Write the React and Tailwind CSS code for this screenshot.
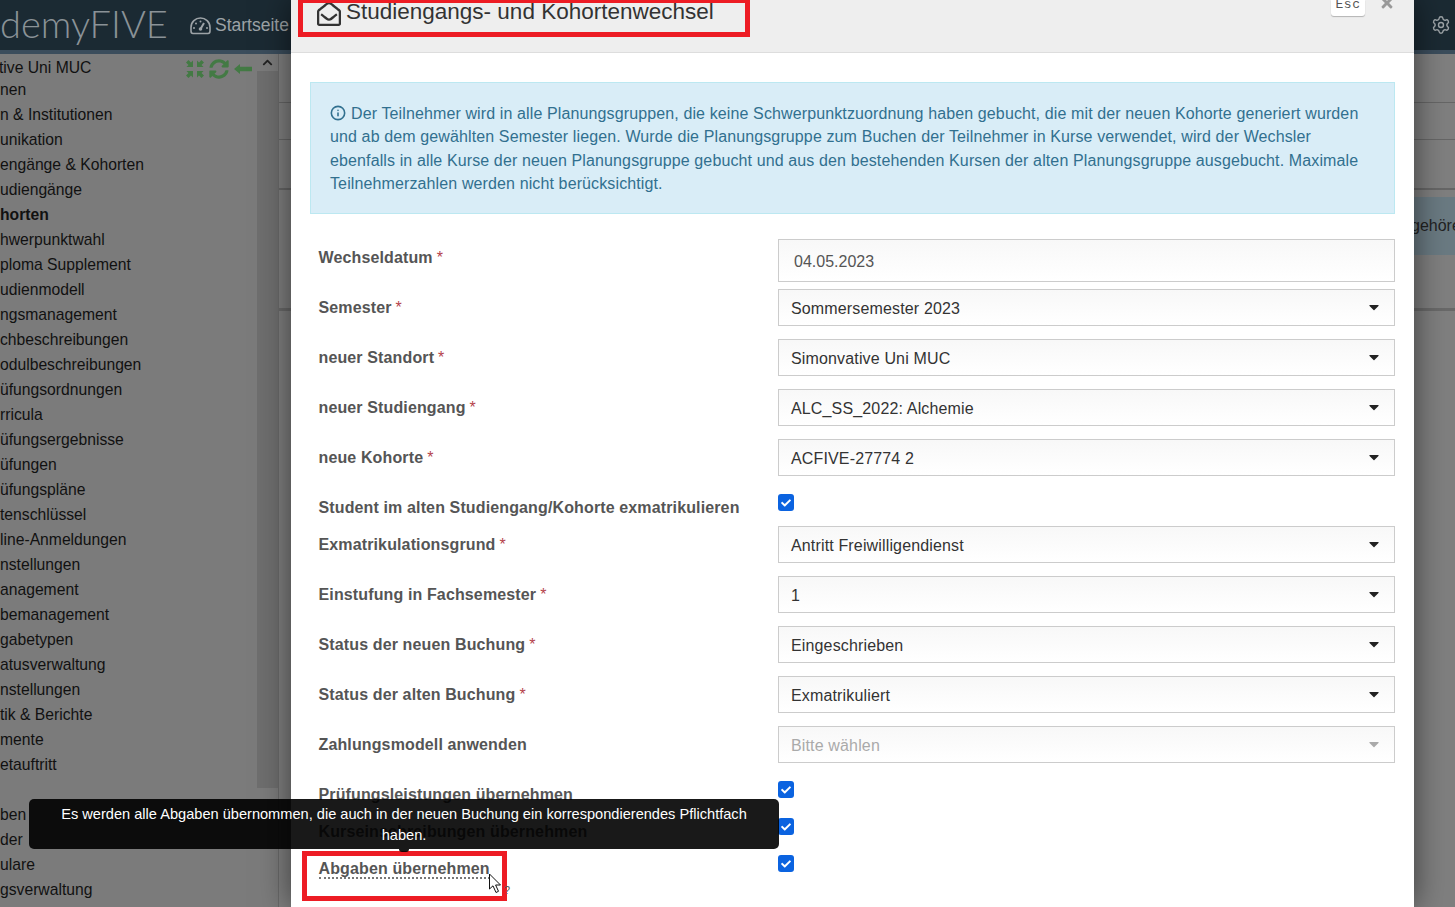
import React from "react";
import { FaRegEnvelopeOpen, FaSyncAlt, FaTimes, FaCaretDown, FaChevronUp, FaCheck } from "react-icons/fa";
import { Info, Settings } from "lucide-react";

const sideRows = [
  "nen", "n & Institutionen", "unikation", "engänge & Kohorten", "udiengänge", "*horten", "hwerpunktwahl", "ploma Supplement", "udienmodell", "ngsmanagement", "chbeschreibungen", "odulbeschreibungen", "üfungsordnungen", "rricula", "üfungsergebnisse", "üfungen", "üfungspläne", "tenschlüssel", "line-Anmeldungen", "nstellungen", "anagement", "bemanagement", "gabetypen", "atusverwaltung", "nstellungen", "tik & Berichte", "mente", "etauftritt", "", "ben", "der", "ulare", "gsverwaltung",
];

function Label({ text, req, dotted }) {
  return (
    <div className="w-[460px] shrink-0 pl-[0.5px] pt-[9px] text-[16px] leading-[20px] font-bold tracking-[0.13px] text-[#555]">
      <span className={dotted ? "border-b-2 border-dotted border-[#777]" : ""}>{text}</span>
      {req && <span className="ml-[4px] font-normal text-[#b5434c]">*</span>}
    </div>
  );
}

function SelectRow({ label, value, disabled }) {
  return (
    <div className="flex h-[37px] mb-[13px]">
      <Label text={label} req={!disabled} />
      <div className="flex flex-1 items-center justify-between border border-[#ccc] bg-gradient-to-b from-[#f8f8f8] to-white pl-[12px] pr-[12px] text-[16px] tracking-[0.15px]">
        <span className={disabled ? "pt-[2px] text-[#aaa]" : "pt-[2px] text-[#333]"}>{value}</span>
        <FaCaretDown className={disabled ? "-mt-[1px] text-[#aaa] text-[16px]" : "-mt-[1px] text-[#222] text-[16px]"} />
      </div>
    </div>
  );
}

function Check() {
  return (
    <div className="mt-[5px] flex h-[17px] w-[16px] items-center justify-center rounded-[3px] bg-[#0b63e0] text-white">
      <FaCheck className="text-[10px]" />
    </div>
  );
}

function CheckRow({ label, dotted }) {
  return (
    <div className="flex h-[37px]">
      <Label text={label} dotted={dotted} />
      <Check />
    </div>
  );
}

function DashIcon() {
  return (
    <svg width="21" height="18" viewBox="0 0 21 18" fill="none" stroke="currentColor" className="mt-[1px]">
      <path d="M3 16.5 H18 Q20 16.5 20 14 V10.5 C20 5 15.5 1 10.5 1 C5.5 1 1 5 1 10.5 V14 Q1 16.5 3 16.5 Z" strokeWidth="1.6" />
      <path d="M10.5 12 L14 6" strokeWidth="2" />
      <circle cx="10.5" cy="12" r="1.8" fill="currentColor" stroke="none" />
      <circle cx="10.5" cy="4.5" r="1" fill="currentColor" stroke="none" />
      <circle cx="6" cy="6.5" r="1" fill="currentColor" stroke="none" />
      <circle cx="4" cy="11" r="1" fill="currentColor" stroke="none" />
      <circle cx="17" cy="11" r="1" fill="currentColor" stroke="none" />
    </svg>
  );
}

function CompressIcon() {
  return (
    <svg width="18" height="18" viewBox="0 0 18 18" fill="currentColor">
      <path d="M0 2.5 L2.5 0 L5 2.5 L7 0.5 V7 H0.5 L2.5 5 Z" />
      <path d="M18 2.5 L15.5 0 L13 2.5 L11 0.5 V7 H17.5 L15.5 5 Z" />
      <path d="M0 15.5 L2.5 18 L5 15.5 L7 17.5 V11 H0.5 L2.5 13 Z" />
      <path d="M18 15.5 L15.5 18 L13 15.5 L11 17.5 V11 H17.5 L15.5 13 Z" />
    </svg>
  );
}

function BackIcon() {
  return (
    <svg width="18" height="10" viewBox="0 0 18 10" fill="currentColor">
      <path d="M0 5 L6 0 V2.8 H18 V7.2 H6 V10 Z" />
    </svg>
  );
}

export default function App() {
  return (
    <div className="relative flex h-[907px] w-[1455px] flex-col overflow-hidden bg-[#7f7f7f] font-['Liberation_Sans',Arial,sans-serif]">
      <header className="flex h-[50px] shrink-0 items-center bg-[#1b2a33] text-[#9da3a7]">
        <span className="-mt-[5px] w-[190px] font-['Lato',sans-serif] text-[38px] font-light leading-none text-[#8a9297]">demyFIVE</span>
        <DashIcon />
        <span className="ml-[4px] text-[17.5px]">Startseite</span>
        <Settings className="ml-auto mr-[4px] h-[20px] w-[20px]" strokeWidth={1.7} />
      </header>
      <div className="h-[4px] shrink-0 bg-[#3b4d5c]" />
      <div className="flex flex-1 overflow-hidden">
        <aside className="flex w-[279px] shrink-0 border-r border-[#6a6a6a] bg-[#7b7b7b] text-[15.7px] text-[#111]">
          <div className="w-[257px] shrink-0 overflow-hidden">
            <div className="flex h-[22.5px] items-start justify-between pr-[5px] pt-[4px] leading-[20px]">
              <span className="-ml-[1px]">tive Uni MUC</span>
              <span className="mt-[1px] flex items-center gap-[5px] text-[#437a44]">
                <CompressIcon />
                <FaSyncAlt className="text-[20px]" />
                <BackIcon />
              </span>
            </div>
            {sideRows.map((t, i) => (
              <div key={i} className={t.startsWith("*") ? "h-[25px] whitespace-nowrap font-bold leading-[25px]" : "h-[25px] whitespace-nowrap leading-[25px]"}>
                {t.replace("*", "")}
              </div>
            ))}
          </div>
          <div className="flex w-[21px] shrink-0 flex-col">
            <div className="flex h-[17px] items-center justify-center text-[#222]">
              <FaChevronUp className="text-[11px]" />
            </div>
            <div className="h-[717px] bg-[#6e6e6e]" />
          </div>
        </aside>
        <main className="flex-1 overflow-hidden text-[16px] text-[#222]">
          <div className="h-[49px] border-b border-[#666]" />
          <div className="h-[37px] border-b border-[#666]" />
          <div className="h-[50px] border-b-2 border-[#666]" />
          <div className="ml-[100px] mt-[7px] flex h-[58px] items-center justify-end bg-[#6a7a82]">
            <span className="w-[41px] overflow-hidden whitespace-nowrap"><span className="-ml-[3px]">gehören</span></span>
          </div>
          <div className="mt-[53px] h-[3px] bg-[#696969]" />
        </main>
      </div>

      <div className="absolute left-[291px] top-0 h-[907px] w-[1123px] overflow-hidden bg-white shadow-[0_0_30px_rgba(0,0,0,0.55)]">
        <div className="flex h-[53px] items-start border-b border-[#ddd] bg-[#eee] pl-[26px]">
          <FaRegEnvelopeOpen className="mt-[2px] text-[24px] text-[#333]" />
          <h1 className="ml-[5px] -mt-[1px] whitespace-nowrap text-[22.5px] font-normal leading-[26px] text-[#333]">Studiengangs- und Kohortenwechsel</h1>
          <div className="ml-auto flex h-[16px] w-[34px] items-end justify-center rounded-b-[3px] bg-white pb-[5px] font-['Liberation_Mono',monospace] text-[13px] leading-[13px] tracking-[0.5px] text-[#555] shadow-[0_1px_1px_rgba(0,0,0,0.25)]">Esc</div>
          <FaTimes className="ml-[14px] mr-[19px] -mt-[5px] text-[16px] text-[#999]" />
        </div>
        <div className="px-[19px] pt-[29px]">
          <div className="h-[132px] border border-[#bce8f1] bg-[#d9edf7] px-[19px] pt-[19px] text-[16px] leading-[23.3px] tracking-[0.12px] text-[#31708f]">
            <Info className="mr-[5px] inline h-[16px] w-[16px] align-[-2px]" strokeWidth={2.4} />
            Der Teilnehmer wird in alle Planungsgruppen, die keine Schwerpunktzuordnung haben gebucht, die mit der neuen Kohorte generiert wurden<br />
            und ab dem gewählten Semester liegen. Wurde die Planungsgruppe zum Buchen der Teilnehmer in Kurse verwendet, wird der Wechsler<br />
            ebenfalls in alle Kurse der neuen Planungsgruppe gebucht und aus den bestehenden Kursen der alten Planungsgruppe ausgebucht. Maximale<br />
            Teilnehmerzahlen werden nicht berücksichtigt.
          </div>
          <form className="mt-[25px] pl-[8px]">
            <div className="mb-[7px] flex h-[43px]">
              <Label text="Wechseldatum" req />
              <div className="flex flex-1 items-center border border-[#ccc] bg-gradient-to-b from-[#f8f8f8] to-white pl-[15px] pt-[2px] text-[16px] text-[#555]">04.05.2023</div>
            </div>
            <SelectRow label="Semester" value="Sommersemester 2023" />
            <SelectRow label="neuer Standort" value="Simonvative Uni MUC" />
            <SelectRow label="neuer Studiengang" value="ALC_SS_2022: Alchemie" />
            <SelectRow label="neue Kohorte" value="ACFIVE-27774 2" />
            <CheckRow label="Student im alten Studiengang/Kohorte exmatrikulieren" />
            <SelectRow label="Exmatrikulationsgrund" value="Antritt Freiwilligendienst" />
            <SelectRow label="Einstufung in Fachsemester" value="1" />
            <SelectRow label="Status der neuen Buchung" value="Eingeschrieben" />
            <SelectRow label="Status der alten Buchung" value="Exmatrikuliert" />
            <SelectRow label="Zahlungsmodell anwenden" value="Bitte wählen" disabled />
            <CheckRow label="Prüfungsleistungen übernehmen" />
            <CheckRow label="Kurseinschreibungen übernehmen" />
            <CheckRow label="Abgaben übernehmen" dotted />
          </form>
        </div>
      </div>

      <div className="absolute left-[298px] top-[-2px] h-[39px] w-[452px] border-[5px] border-[#ed1c24]" />
      <div className="absolute left-[302px] top-[851px] h-[50px] w-[205px] border-[5px] border-[#ed1c24]" />

      <div className="absolute left-[29px] top-[799px] h-[50px] w-[750px] rounded-[5px] bg-black/90 px-[20px] pt-[5px] text-center text-[14.6px] leading-[21px] text-white">
        Es werden alle Abgaben übernommen, die auch in der neuen Buchung ein korrespondierendes Pflichtfach haben.
        <div className="absolute left-[370px] top-[50px] h-[3px] w-[10px] rounded-b-[3px] bg-black/90" />
      </div>

      <svg className="absolute left-[488px] top-[873px]" width="16" height="21" viewBox="0 0 16 21">
        <path d="M1.5 1 V16 L5 12.8 L8 19.5 L10.5 18.3 L7.6 12 H12.5 Z" fill="#fff" stroke="#111" strokeWidth="1" />
      </svg>
      <span className="absolute left-[504px] top-[883px] text-[11px] leading-[14px] text-[#555]">?</span>
    </div>
  );
}
